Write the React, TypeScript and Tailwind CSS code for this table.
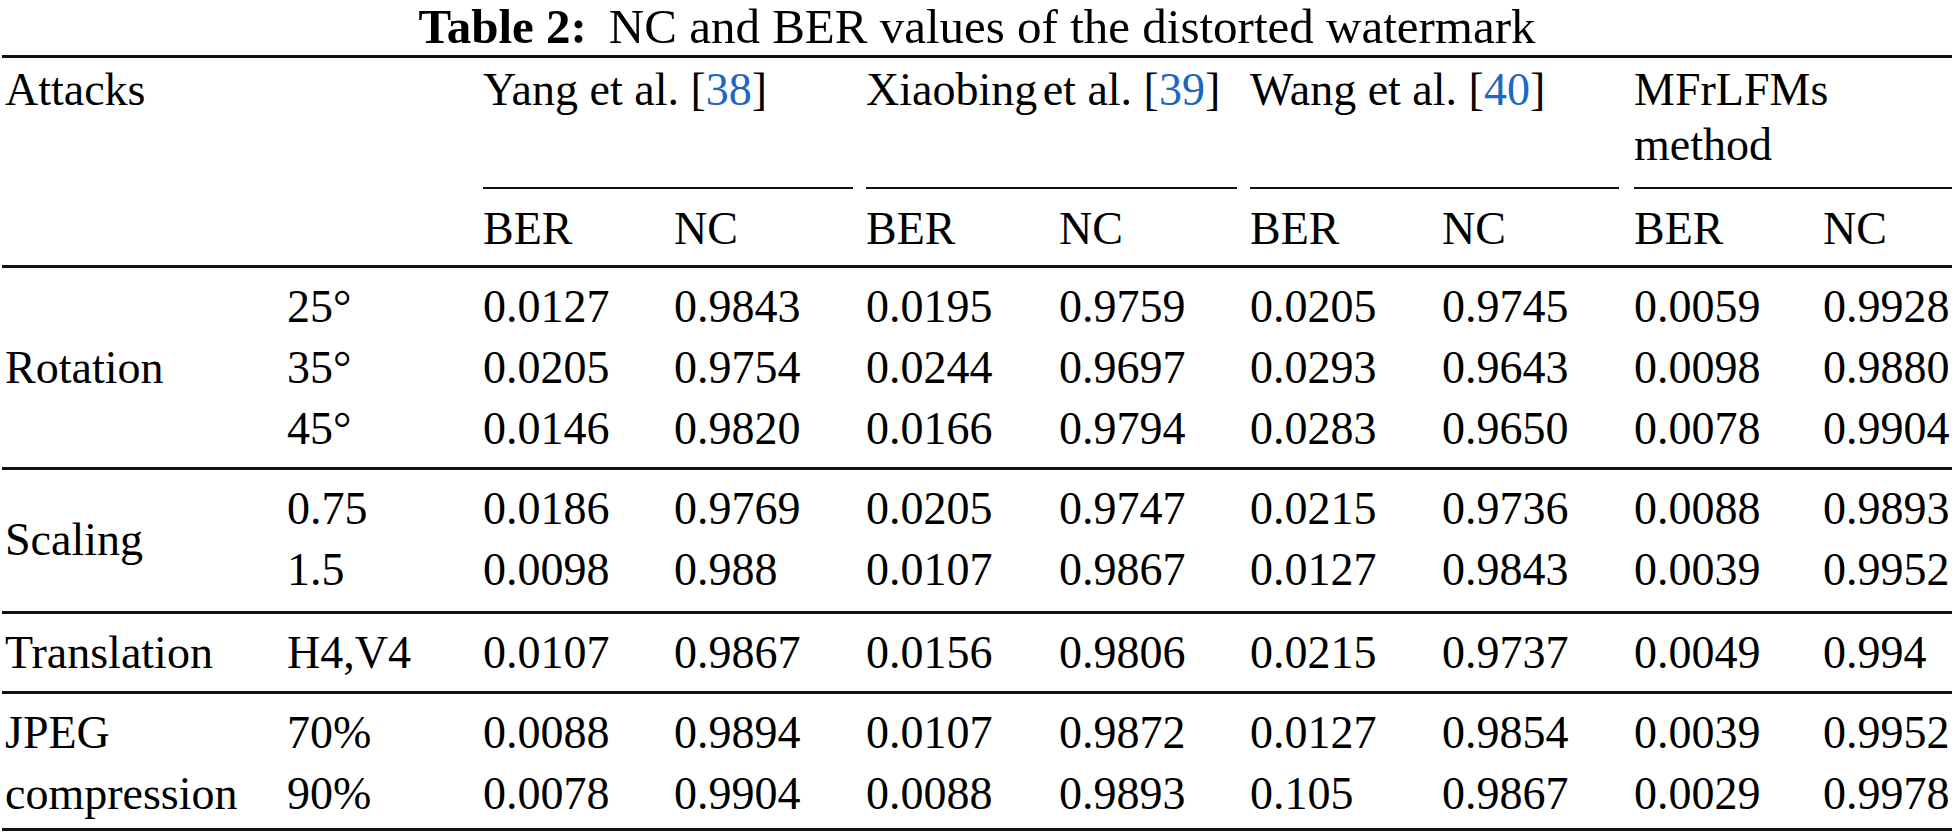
import React from 'react'

// column template shared by the header and every body group
const grid =
  'grid grid-cols-[285px_196px_191px_192px_193px_191px_192px_192px_189px_1fr]'

const cite = 'text-[#1a68c4]'

interface Group {
  label: string[]
  rows: string[][]
  pad: string
}

const groups: Group[] = [
  {
    label: ['Rotation'],
    pad: 'pt-2 pb-2',
    rows: [
      ['25°', '0.0127', '0.9843', '0.0195', '0.9759', '0.0205', '0.9745', '0.0059', '0.9928'],
      ['35°', '0.0205', '0.9754', '0.0244', '0.9697', '0.0293', '0.9643', '0.0098', '0.9880'],
      ['45°', '0.0146', '0.9820', '0.0166', '0.9794', '0.0283', '0.9650', '0.0078', '0.9904'],
    ],
  },
  {
    label: ['Scaling'],
    pad: 'pt-2 pb-[11px]',
    rows: [
      ['0.75', '0.0186', '0.9769', '0.0205', '0.9747', '0.0215', '0.9736', '0.0088', '0.9893'],
      ['1.5', '0.0098', '0.988', '0.0107', '0.9867', '0.0127', '0.9843', '0.0039', '0.9952'],
    ],
  },
  {
    label: ['Translation'],
    pad: 'pt-2 pb-2',
    rows: [
      ['H4,V4', '0.0107', '0.9867', '0.0156', '0.9806', '0.0215', '0.9737', '0.0049', '0.994'],
    ],
  },
  {
    label: ['JPEG', 'compression'],
    pad: 'pt-2 pb-1',
    rows: [
      ['70%', '0.0088', '0.9894', '0.0107', '0.9872', '0.0127', '0.9854', '0.0039', '0.9952'],
      ['90%', '0.0078', '0.9904', '0.0088', '0.9893', '0.105', '0.9867', '0.0029', '0.9978'],
    ],
  },
]

const Rule = () => <div className="h-[3px] bg-[#111]" />

const rowSpan: Record<number, string> = {
  1: 'row-span-1',
  2: 'row-span-2',
  3: 'row-span-3',
}

const BodyGroup: React.FC<{ group: Group }> = ({ group }) => (
  <div className={`${grid} ${group.pad} leading-[61px]`}>
    <div className={`${rowSpan[group.rows.length]} flex flex-col justify-center pl-[3px]`}>
      {group.label.map((l) => (
        <span key={l}>{l}</span>
      ))}
    </div>
    {group.rows.map((row, i) => (
      <React.Fragment key={i}>
        {row.map((cell, j) => (
          <div key={j} className="whitespace-nowrap">
            {cell}
          </div>
        ))}
      </React.Fragment>
    ))}
  </div>
)

export default function App() {
  return (
    <div className="bg-white text-black font-['Liberation_Serif','Times_New_Roman',serif] text-[46px]">
      {/* Caption */}
      <div className="text-center text-[49px] leading-[54px] mb-px">
        <span className="font-bold">Table 2:</span>
        <span className="ml-[22px]">NC and BER values of the distorted watermark</span>
      </div>

      <div className="px-[2px]">
        <Rule />

        {/* Header */}
        <div className={`${grid} pt-1 pb-[9px]`}>
          <div className="row-span-3 pl-[3px] leading-[55px]">Attacks</div>
          <div className="row-span-3" />

          <div className="col-span-2 h-[110px] leading-[55px] whitespace-nowrap">
            Yang et al. [<span className={cite}>38</span>]
          </div>
          <div className="col-span-2 h-[110px] leading-[55px] whitespace-nowrap">
            Xiaobing<span className="tracking-[-6px]"> </span>et al. [<span className={cite}>39</span>]
          </div>
          <div className="col-span-2 h-[110px] leading-[55px] whitespace-nowrap">
            Wang et al. [<span className={cite}>40</span>]
          </div>
          <div className="col-span-2 h-[110px] leading-[55px]">
            MFrLFMs
            <br />
            method
          </div>

          <div className="col-span-2 mt-[15px] mr-[13px] h-[2px] bg-[#111]" />
          <div className="col-span-2 mt-[15px] mr-[13px] h-[2px] bg-[#111]" />
          <div className="col-span-2 mt-[15px] mr-[15px] h-[2px] bg-[#111]" />
          <div className="col-span-2 mt-[15px] h-[2px] bg-[#111]" />

          {['BER', 'NC', 'BER', 'NC', 'BER', 'NC', 'BER', 'NC'].map((h, i) => (
            <div key={i} className="pt-3 leading-[55px]">
              {h}
            </div>
          ))}
        </div>

        {groups.map((g) => (
          <React.Fragment key={g.label[0]}>
            <Rule />
            <BodyGroup group={g} />
          </React.Fragment>
        ))}
        <Rule />
      </div>
    </div>
  )
}
